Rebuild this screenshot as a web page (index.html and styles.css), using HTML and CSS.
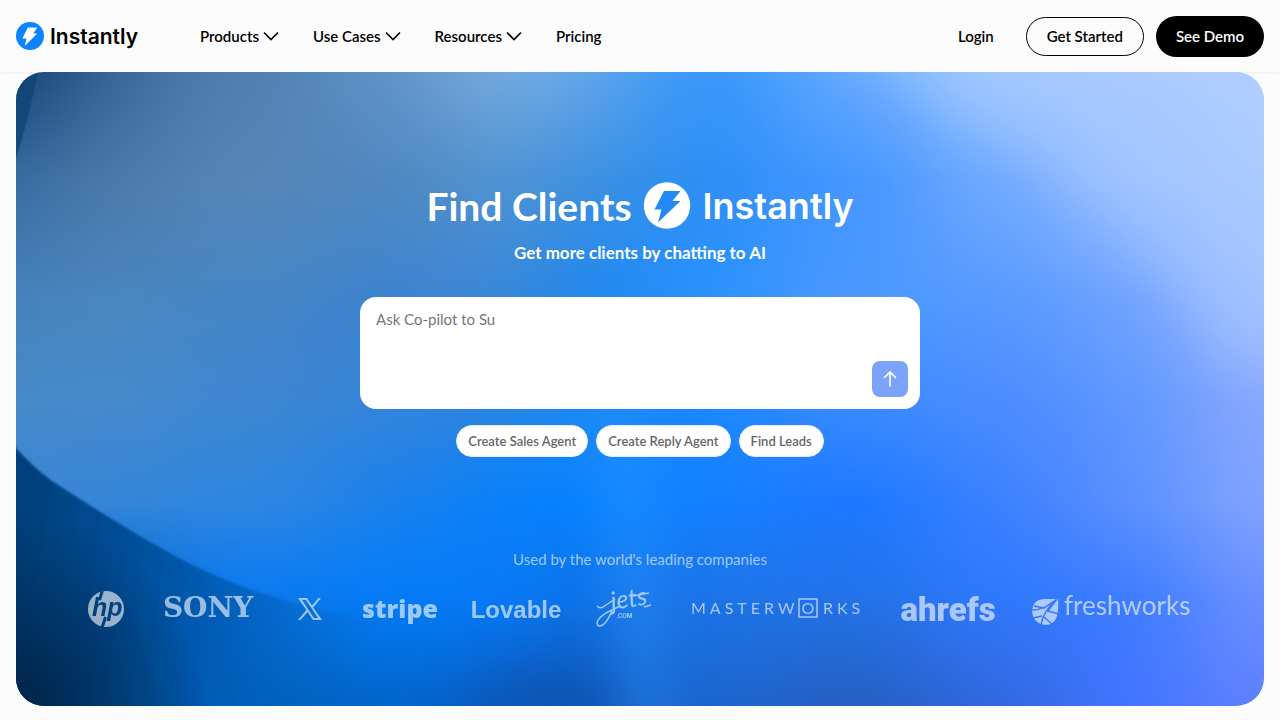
FILE: index.html
```html
<!DOCTYPE html>
<html lang="en">
<head>
  <meta charset="UTF-8">
  <title>Instantly</title>
  <meta name="viewport" content="width=device-width, initial-scale=1.0">
  <link rel="stylesheet" href="styles.css">
</head>
<body>
  <header class="header">
    <a href="#" class="brand">
      <svg class="brand-icon" viewBox="0 0 28 28" aria-hidden="true">
        <circle cx="14" cy="14" r="14" fill="#0a84ff"/>
        <path d="M11.8 5.6h9.6l-4.2 5.8h4L8.800 24l1.700-7.600H6.400z" fill="#fff"/>
      </svg>
      <span>Instantly</span>
    </a>
    <nav class="nav">
      <button type="button">Products
        <svg viewBox="0 0 16 16" class="chevron"><path d="M1 4.500L8 11.500 15 4.500"/></svg>
      </button>
      <button type="button">Use Cases
        <svg viewBox="0 0 16 16" class="chevron"><path d="M1 4.500L8 11.500 15 4.500"/></svg>
      </button>
      <button type="button">Resources
        <svg viewBox="0 0 16 16" class="chevron"><path d="M1 4.500L8 11.500 15 4.500"/></svg>
      </button>
      <a href="#">Pricing</a>
    </nav>
    <div class="account">
      <a href="#" class="login">Login</a>
      <a href="#" class="btn btn-outline">Get Started</a>
      <a href="#" class="btn btn-dark">See Demo</a>
    </div>
  </header>

  <main class="hero">
    <svg class="hero-bg" viewBox="0 0 1248 634" preserveAspectRatio="none" aria-hidden="true">
      <defs>
        <filter id="soft" color-interpolation-filters="sRGB" filterUnits="userSpaceOnUse" x="-300" y="0" width="1850" height="634"><feGaussianBlur stdDeviation="46 0"/></filter>
        <filter id="glow" color-interpolation-filters="sRGB" x="-100%" y="-100%" width="300%" height="300%"><feGaussianBlur stdDeviation="26"/></filter>
        <filter id="edge" x="-5%" y="-5%" width="110%" height="110%"><feGaussianBlur stdDeviation="1"/></filter>
        <linearGradient id="c0" x2="0" y2="1"><stop offset="0" stop-color="#134070"/><stop offset=".17" stop-color="#34699f"/><stop offset=".36" stop-color="#4682bb"/><stop offset=".52" stop-color="#4489c8"/><stop offset=".7" stop-color="#3a86d6"/></linearGradient>
        <linearGradient id="c1" x2="0" y2="1"><stop offset="0" stop-color="#366796"/><stop offset=".17" stop-color="#4b7aa8"/><stop offset=".36" stop-color="#4a86bf"/><stop offset=".52" stop-color="#458aca"/><stop offset=".68" stop-color="#3585d8"/><stop offset=".82" stop-color="#0066c4"/><stop offset="1" stop-color="#0058a8"/></linearGradient>
        <linearGradient id="c2" x2="0" y2="1"><stop offset="0" stop-color="#5080b0"/><stop offset=".17" stop-color="#5585b5"/><stop offset=".36" stop-color="#4585c5"/><stop offset=".52" stop-color="#3d87d0"/><stop offset=".68" stop-color="#2e86e0"/><stop offset=".8" stop-color="#107cf0"/><stop offset="1" stop-color="#0060b8"/></linearGradient>
        <linearGradient id="c3" x2="0" y2="1"><stop offset="0" stop-color="#5f93c8"/><stop offset=".17" stop-color="#4f87c0"/><stop offset=".36" stop-color="#3c84cf"/><stop offset=".52" stop-color="#3484da"/><stop offset=".68" stop-color="#1a80ec"/><stop offset=".82" stop-color="#047cf8"/><stop offset="1" stop-color="#0066cc"/></linearGradient>
        <linearGradient id="c4" x2="0" y2="1"><stop offset="0" stop-color="#78abde"/><stop offset=".17" stop-color="#5294d2"/><stop offset=".36" stop-color="#3a87d6"/><stop offset=".52" stop-color="#2a84e0"/><stop offset=".68" stop-color="#0880fa"/><stop offset=".83" stop-color="#067af6"/><stop offset="1" stop-color="#0a60cc"/></linearGradient>
        <linearGradient id="c5" x2="0" y2="1"><stop offset="0" stop-color="#5fa5ea"/><stop offset=".17" stop-color="#3c90e0"/><stop offset=".33" stop-color="#2088ee"/><stop offset=".52" stop-color="#1a8af8"/><stop offset=".68" stop-color="#0482ff"/><stop offset=".83" stop-color="#0f70e4"/><stop offset="1" stop-color="#1056b4"/></linearGradient>
        <linearGradient id="c6" x2="0" y2="1"><stop offset="0" stop-color="#3496fa"/><stop offset=".17" stop-color="#2b8ef5"/><stop offset=".36" stop-color="#2a92ff"/><stop offset=".52" stop-color="#1a88ff"/><stop offset=".68" stop-color="#1480ff"/><stop offset=".83" stop-color="#1c74e8"/><stop offset="1" stop-color="#1c66d0"/></linearGradient>
        <linearGradient id="c7" x2="0" y2="1"><stop offset="0" stop-color="#62a8ff"/><stop offset=".17" stop-color="#4496ff"/><stop offset=".36" stop-color="#4a98ff"/><stop offset=".52" stop-color="#3a8aff"/><stop offset=".68" stop-color="#1c78ff"/><stop offset=".83" stop-color="#2272e8"/><stop offset="1" stop-color="#2460c0"/></linearGradient>
        <linearGradient id="c8" x2="0" y2="1"><stop offset="0" stop-color="#a0c8ff"/><stop offset=".17" stop-color="#70aaff"/><stop offset=".36" stop-color="#569aff"/><stop offset=".52" stop-color="#4a8cff"/><stop offset=".68" stop-color="#3a80ff"/><stop offset=".83" stop-color="#2e78fc"/><stop offset="1" stop-color="#3068e0"/></linearGradient>
        <linearGradient id="c9" x2="0" y2="1"><stop offset="0" stop-color="#b0ccff"/><stop offset=".17" stop-color="#9cc0ff"/><stop offset=".36" stop-color="#70a2ff"/><stop offset=".52" stop-color="#5f98ff"/><stop offset=".68" stop-color="#5a90ff"/><stop offset=".83" stop-color="#3c7cff"/><stop offset="1" stop-color="#4274ff"/></linearGradient>
        <linearGradient id="c10" x2="0" y2="1"><stop offset="0" stop-color="#bcd4ff"/><stop offset=".17" stop-color="#b4ccff"/><stop offset=".36" stop-color="#a0bcff"/><stop offset=".52" stop-color="#88a8fc"/><stop offset=".68" stop-color="#80a4ff"/><stop offset=".83" stop-color="#6c90ff"/><stop offset="1" stop-color="#5e80ff"/></linearGradient>
        <linearGradient id="hill" gradientUnits="userSpaceOnUse" x1="0" y1="520" x2="360" y2="570"><stop offset="0" stop-color="#00417c"/><stop offset=".4" stop-color="#0054a4"/><stop offset=".6" stop-color="#005cb4" stop-opacity=".8"/><stop offset="1" stop-color="#0068cc" stop-opacity="0"/></linearGradient>
        <radialGradient id="corner" gradientUnits="userSpaceOnUse" cx="0" cy="634" r="190"><stop offset="0" stop-color="#002448"/><stop offset="1" stop-color="#002448" stop-opacity="0"/></radialGradient>
      </defs>
      <g filter="url(#soft)">
        <path fill="url(#c0)" d="M-200 0H40V634H-200z"/>
        <path fill="url(#c1)" d="M40 0H150V634H40z"/>
        <path fill="url(#c2)" d="M150 0H310V634H150z"/>
        <path fill="url(#c3)" d="M310 0H430V634H310z"/>
        <path fill="url(#c4)" d="M430 0H530V634H430z"/>
        <path fill="url(#c5)" d="M530 0H630V634H530z"/>
        <path fill="url(#c6)" d="M630 0H760V634H630z"/>
        <path fill="url(#c7)" d="M760 0H910V634H760z"/>
        <path fill="url(#c8)" d="M910 0H1050V634H910z"/>
        <path fill="url(#c9)" d="M1050 0H1180V634H1050z"/>
        <path fill="url(#c10)" d="M1180 0H1450V634H1180z"/>
      </g>
      <path filter="url(#glow)" fill="#2c94ff" opacity=".6" d="M585 340H625L650 700H615z"/>
      <path filter="url(#glow)" fill="#a4c8ff" opacity=".5" d="M800 -40L960 40L1090 130L1220 290H1300V-40z"/>
      <ellipse filter="url(#glow)" cx="520" cy="640" rx="75" ry="45" fill="#0c4fa2" opacity=".5"/>
      <path filter="url(#edge)" fill="url(#hill)" d="M-20 355L0 376Q18 396 36 409Q80 438 134 470Q180 497 230 516Q330 550 440 560V660H-20z"/>
      <path fill="url(#corner)" d="M0 376L36 409L134 470L230 516V634H0z"/>
      <path fill="#0d4274" opacity=".7" d="M0 0H22Q12 50 0 86z"/>
    </svg>

    <div class="hero-content">
      <h1 class="title">
        <span>Find Clients</span>
        <svg class="title-icon" viewBox="0 0 47 47" aria-hidden="true">
          <circle cx="23" cy="23.500" r="23.200" fill="#fff"/>
          <path d="M20 9H36.500L28.500 19H36.500L14 40.500L17.500 27.500H10.500z" fill="#2389f4"/>
        </svg>
        <span class="title-brand">Instantly</span>
      </h1>
      <p class="subtitle">Get more clients by chatting to AI</p>

      <form class="prompt">
        <textarea aria-label="Ask Co-pilot" placeholder="Ask Co-pilot to Su"></textarea>
        <button type="submit" aria-label="Send">
          <svg viewBox="0 0 20 20"><path d="M10 17.500V3M4 9L10 3 16 9"/></svg>
        </button>
      </form>

      <div class="chips">
        <button type="button">Create Sales Agent</button>
        <button type="button">Create Reply Agent</button>
        <button type="button">Find Leads</button>
      </div>

      <p class="used-by">Used by the world's leading companies</p>
      <div class="logos">
        <svg width="36" height="36" viewBox="0 0 36 36" role="img" aria-label="hp">
          <mask id="hp">
            <circle cx="18" cy="18" r="18" fill="#fff"/>
            <text x="4" y="25" class="logo-hp">hp</text>
            <path d="M14.500 -1L11.500 9M17.500 26L14 37" stroke="#000" stroke-width="3"/>
          </mask>
          <rect width="36" height="36" mask="url(#hp)"/>
        </svg>
        <svg width="96" height="36" viewBox="0 0 96 36"><text x="48" y="26" text-anchor="middle" class="logo-sony">SONY</text></svg>
        <svg width="36" height="36" viewBox="0 0 36 36" role="img" aria-label="X">
          <path fill-rule="evenodd" d="M6 7H15L20 14.500L26.500 7H29L21.300 16.500L30 29H21L15.500 21L8.500 29H6L14.300 19zM10 9L22 27H26L14 9z"/>
        </svg>
        <svg width="72" height="36" viewBox="0 0 72 36"><text x="36" y="27" text-anchor="middle" class="logo-stripe">stripe</text></svg>
        <svg width="88" height="36" viewBox="0 0 88 36"><text x="44" y="27" text-anchor="middle" class="logo-lovable">Lovable</text></svg>
        <svg width="56" height="36" viewBox="0 0 56 36">
          <text x="16" y="19" transform="rotate(-9 16 19)" class="logo-jets">jets</text>
          <path class="swash" d="M1 15Q4 19 10 14L19 8M16 20Q9 36 3 35C-2 33 3 25 14 20L24 15M37 5L53 2M48 16L55 14"/>
          <text x="20" y="27" class="logo-com">.COM</text>
        </svg>
        <svg width="176" height="36" viewBox="0 0 176 36">
          <text x="3" y="23" class="logo-master">MASTERW</text>
          <rect x="111" y="8" width="18" height="18" class="frame"/>
          <text x="120" y="23" text-anchor="middle" class="logo-o">O</text>
          <text x="135" y="23" class="logo-master">RKS</text>
        </svg>
        <svg width="96" height="36" viewBox="0 0 96 36"><text x="48" y="30" text-anchor="middle" class="logo-ahrefs">ahrefs</text></svg>
        <svg width="160" height="36" viewBox="0 0 160 36">
          <mask id="leaf">
            <path d="M26 8Q28 34 14 34Q1 33 0 20Q1 7 15 8z" fill="#fff"/>
            <path d="M0 19Q13 19 25 8Q11 20 9 34M2 15L12 17L25 8L16 20L27 23M10 25L1 27M11 25L20 33" fill="none" stroke="#000" stroke-width="1.400"/>
          </mask>
          <rect width="30" height="36" mask="url(#leaf)"/>
          <text x="32" y="24" class="logo-fresh">freshworks</text>
        </svg>
      </div>
    </div>
  </main>
</body>
</html>
```
FILE: styles.css
```css
*{box-sizing:border-box;margin:0;padding:0;}
body{
  background:#fcfcfc;
  color:#000;
  font-family:Lato,"Open Sans",sans-serif;
}
a{color:inherit;text-decoration:none;}
button,textarea{font-family:inherit;border:none;}
button{cursor:pointer;}

.header{
  display:flex;
  align-items:center;
  height:72px;
  padding:0 16px;
  box-shadow:0 1px 3px rgba(0,0,0,.06);
  font-size:15px;
  font-weight:600;
}
.brand{
  display:flex;
  align-items:center;
  gap:6px;
  width:184px;
  font-family:Inter,sans-serif;
  font-size:21px;
  font-weight:600;
}
.brand-icon{width:28px;height:28px;}
.nav{
  display:flex;
  align-items:center;
  gap:34px;
}
.nav button{
  display:flex;
  align-items:center;
  gap:4px;
  background:none;
  font-size:15px;
  font-weight:600;
}
.chevron{
  width:16px;
  height:16px;
  fill:none;
  stroke:#000;
  stroke-width:1.6;
}
.account{
  display:flex;
  align-items:center;
  gap:12px;
  margin-left:auto;
}
.login{margin-right:20px;}
.btn{
  padding:0 20px;
  border-radius:24px;
  line-height:41px;
}
.btn-outline{
  border:1px solid #000;
  line-height:37px;
}
.btn-dark{background:#000;color:#fff;}

.hero{
  display:grid;
  margin:0 16px 14px;
  border-radius:28px;
  overflow:hidden;
  color:#fff;
}
.hero-bg,.hero-content{grid-area:1/1;}
.hero-bg{
  width:100%;
  height:100%;
  min-height:0;
  contain:size;
}
.hero-content{
  z-index:1;
  display:flex;
  flex-direction:column;
  align-items:center;
  padding:110px 24px 79px;
}
.title{
  display:flex;
  align-items:center;
  gap:12px;
  height:47px;
  font-size:39px;
  line-height:48px;
  font-weight:700;
}
.title-icon{width:47px;height:47px;}
.title-brand{
  font-family:Inter,sans-serif;
  font-size:36px;
  font-weight:600;
}
.subtitle{
  margin-top:12px;
  font-size:17px;
  line-height:24px;
  font-weight:700;
}
.prompt{
  display:flex;
  flex-direction:column;
  width:100%;
  max-width:560px;
  height:112px;
  margin-top:32px;
  padding:12px;
  border-radius:16px;
  background:#fff;
}
.prompt textarea{
  flex:1;
  min-height:0;
  padding:0 4px;
  resize:none;
  outline:none;
  background:none;
  color:#222;
  font-size:15px;
  line-height:20px;
}
.prompt textarea::placeholder{color:#757575;}
.prompt button{
  display:grid;
  place-items:center;
  align-self:flex-end;
  width:36px;
  height:36px;
  border-radius:8px;
  background:#7ca3fa;
}
.prompt svg{
  width:20px;
  height:20px;
  fill:none;
  stroke:#fff;
  stroke-width:1.6;
}
.chips{
  display:flex;
  flex-wrap:wrap;
  justify-content:center;
  gap:8px;
  margin-top:16px;
}
.chips button{
  height:32px;
  padding:0 11px;
  border:1px solid #e4eefb;
  border-radius:16px;
  background:#fff;
  color:#666;
  font-size:13px;
  font-weight:600;
}
.used-by{
  margin-top:90px;
  color:rgba(255,255,255,.6);
  font-size:15px;
  line-height:24px;
}
.logos{
  display:flex;
  flex-wrap:wrap;
  justify-content:center;
  gap:20px 36px;
  margin-top:20px;
}
.logos svg{
  overflow:visible;
  fill:#fff;
  opacity:.6;
}
.logo-hp{font:italic 700 25px "Liberation Sans",sans-serif;fill:#000;}
.logo-sony{font:700 28px "DejaVu Serif",serif;}
.logo-stripe{font:800 25px "Open Sans",sans-serif;}
.logo-lovable{font:700 24px "Liberation Sans",sans-serif;}
.logo-jets{font:italic 400 25px Lato,sans-serif;}
.logo-com{font:700 6px Inter,sans-serif;}
.logo-master{font:400 16px Lato,sans-serif;letter-spacing:4px;}
.logo-o{font:400 16px Lato,sans-serif;}
.logo-ahrefs{font:900 33px Roboto,sans-serif;}
.logo-fresh{font:400 26px Lato,sans-serif;}
.frame,.swash{
  fill:none;
  stroke:#fff;
  stroke-width:1.5;
}
```
